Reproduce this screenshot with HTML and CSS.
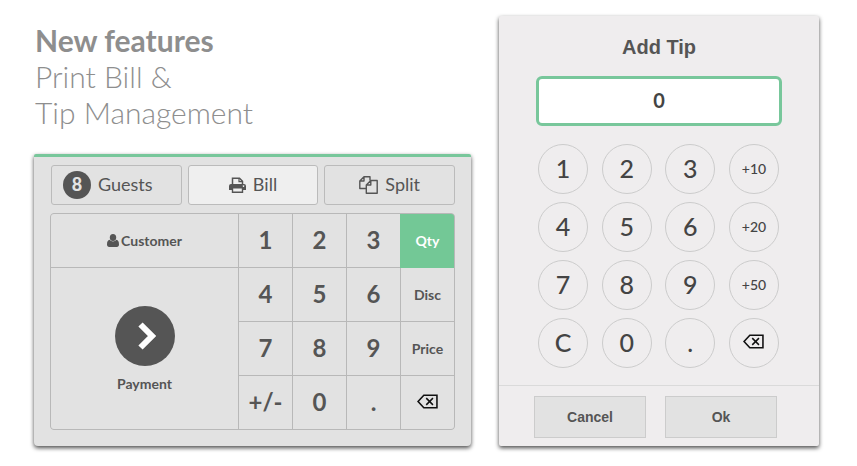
FILE: index.html
```html
<!DOCTYPE html>
<html lang="en">
<head>
    <meta charset="UTF-8">
    <meta name="viewport" content="width=device-width, initial-scale=1.0">
    <title>New features - Print Bill &amp; Tip Management</title>
    <link rel="stylesheet" href="styles.css">
</head>
<body>
    <svg width="0" height="0" class="sprite" aria-hidden="true">
        <symbol id="backspace" viewBox="0 0 20 14">
            <path d="M6.5 1H19v12H6.5L1 7z" fill="none" stroke="currentColor" stroke-width="1.5"/>
            <path d="M8.8 3.8l6.400 6.400M15.200 3.800l-6.400 6.400" fill="none" stroke="currentColor" stroke-width="1.4"/>
        </symbol>
    </svg>

    <main class="page">
        <section class="features">
            <h1>New features <span>Print Bill &amp;<br>Tip Management</span></h1>

            <div class="order-panel">
                <div class="actions">
                    <button type="button" class="action guests"><span class="badge">8</span><span>Guests</span></button>
                    <button type="button" class="action active">
                        <svg width="17" height="16" viewBox="0 0 17 16">
                            <path d="M3.500 8V1.200h7l3 3V8" fill="none" stroke="currentColor" stroke-width="1.500"/>
                            <path d="M10 1v3.700h3.500" fill="none" stroke="currentColor" stroke-width="1.200"/>
                            <path fill-rule="evenodd" d="M2 7h13a2 2 0 0 1 2 2v4h-2.800v3H2.800v-3H0V9a2 2 0 0 1 2-2zm2.200 4.600v3h8.600v-3zM14.500 8.300a.8.8 0 1 0 .01 0z" fill="currentColor"/>
                        </svg>
                        <span>Bill</span>
                    </button>
                    <button type="button" class="action">
                        <svg width="19" height="18" viewBox="0 0 19 18" fill="none" stroke="currentColor" stroke-width="1.400" stroke-linejoin="round">
                            <path d="M7 12.500H.8V5L5 .8h6V4.500M5 .8V5H.8"/>
                            <path d="M18.200 4.500v12.700H7.300V9l4.500-4.500zM11.800 4.500V9H7.300"/>
                        </svg>
                        <span>Split</span>
                    </button>
                </div>

                <div class="keypad">
                    <button type="button" class="key customer">
                        <svg width="12" height="13" viewBox="0 0 12 13" fill="currentColor">
                            <ellipse cx="6" cy="3.500" rx="3.200" ry="3.500"/>
                            <path d="M2.600 5.800C.8 6 0 7.800 0 10.500 0 12 .8 13 2.200 13h7.600c1.400 0 2.200-1 2.200-2.500 0-2.700-.8-4.500-2.600-4.700-1.900 2.300-4.900 2.300-6.800 0z"/>
                        </svg>
                        Customer
                    </button>
                    <button type="button" class="key">1</button>
                    <button type="button" class="key">2</button>
                    <button type="button" class="key">3</button>
                    <button type="button" class="key mode selected">Qty</button>

                    <button type="button" class="key payment">
                        <span class="circle">
                            <svg width="20" height="30" viewBox="0 0 20 30">
                                <path d="M3.500 3.500L15 15 3.500 26.500" fill="none" stroke="currentColor" stroke-width="6"/>
                            </svg>
                        </span>
                        Payment
                    </button>
                    <button type="button" class="key">4</button>
                    <button type="button" class="key">5</button>
                    <button type="button" class="key">6</button>
                    <button type="button" class="key mode">Disc</button>

                    <button type="button" class="key">7</button>
                    <button type="button" class="key">8</button>
                    <button type="button" class="key">9</button>
                    <button type="button" class="key mode">Price</button>

                    <button type="button" class="key">+/-</button>
                    <button type="button" class="key">0</button>
                    <button type="button" class="key">.</button>
                    <button type="button" class="key delete" aria-label="Backspace"><svg width="21" height="15"><use href="#backspace"/></svg></button>
                </div>
            </div>
        </section>

        <section class="tip-popup">
            <div class="tip-body">
                <h2><label for="tip">Add Tip</label></h2>
                <input type="text" id="tip" name="tip" value="0">

                <div class="tip-keys">
                    <button type="button">1</button>
                    <button type="button">2</button>
                    <button type="button">3</button>
                    <button type="button" class="add">+10</button>
                    <button type="button">4</button>
                    <button type="button">5</button>
                    <button type="button">6</button>
                    <button type="button" class="add">+20</button>
                    <button type="button">7</button>
                    <button type="button">8</button>
                    <button type="button">9</button>
                    <button type="button" class="add">+50</button>
                    <button type="button">C</button>
                    <button type="button">0</button>
                    <button type="button">.</button>
                    <button type="button" class="delete" aria-label="Backspace"><svg width="21" height="15"><use href="#backspace"/></svg></button>
                </div>
            </div>
            <div class="tip-footer">
                <button type="button">Cancel</button>
                <button type="button">Ok</button>
            </div>
        </section>
    </main>
</body>
</html>
```
FILE: styles.css
```css
* {
    box-sizing: border-box;
}

body {
    margin: 0;
    background: #fff;
    color: #555;
    font-family: Lato, sans-serif;
}

button {
    margin: 0;
    padding: 0;
    border: none;
    background: none;
    color: inherit;
    font-family: inherit;
    cursor: pointer;
}

.sprite {
    position: absolute;
}

.page {
    display: grid;
    grid-template-columns: minmax(0, 1fr) 320px;
    gap: 28px;
    padding: 16px 38px 20px 34px;
}

.features {
    display: flex;
    flex-direction: column;
    justify-content: space-between;
}

h1 {
    margin: 6px 0 0 1px;
    color: #8e8e8e;
    font-size: 30px;
    line-height: 36px;
    font-weight: 700;
}

h1 span {
    display: block;
    font-weight: 300;
}

/* Order panel */
.order-panel {
    padding: 8px 16px 16px;
    border-top: 3px solid #78c79b;
    border-radius: 2px 2px 4px 4px;
    background: #e2e2e2;
    box-shadow: 0 2px 4px rgba(0, 0, 0, 0.7);
}

.actions {
    display: grid;
    grid-template-columns: repeat(3, 1fr);
    gap: 6px;
    margin-bottom: 8px;
    padding-left: 1px;
}

.action {
    display: flex;
    align-items: center;
    justify-content: center;
    gap: 7px;
    height: 40px;
    border: 1px solid #bbb;
    border-radius: 3px;
    font-size: 18px;
}

.action span {
    padding-bottom: 2px;
}

.action.active {
    background: #efefef;
}

.guests {
    justify-content: flex-start;
    padding-left: 11px;
}

.action .badge {
    width: 28px;
    height: 28px;
    padding: 0;
    border-radius: 50%;
    background: #555;
    color: #e2e2e2;
    font-weight: 900;
    line-height: 27px;
}

.keypad {
    display: grid;
    grid-template-columns: 1fr repeat(4, 53px);
    grid-auto-rows: 53px;
    gap: 1px;
    border: 1px solid #b8b8b8;
    border-radius: 4px;
    background: #b8b8b8;
    overflow: hidden;
}

.key {
    padding-bottom: 2px;
    background: #e2e2e2;
    font-size: 24px;
    font-weight: 700;
}

.mode,
.customer,
.payment {
    padding-bottom: 0;
    font-size: 14px;
}

.selected {
    margin: -1px;
    background: #73c896;
    color: #fff;
}

.customer {
    display: flex;
    align-items: center;
    justify-content: center;
    gap: 2px;
}

.payment {
    display: flex;
    flex-direction: column;
    align-items: center;
    justify-content: center;
    gap: 9px;
    grid-row: span 3;
}

.circle {
    display: flex;
    align-items: center;
    justify-content: center;
    width: 60px;
    height: 60px;
    padding-left: 4px;
    border-radius: 50%;
    background: #555;
    color: #fff;
}

.delete {
    color: #111;
}

.delete svg {
    display: block;
    margin: 0 auto;
}

/* Add tip popup */
.tip-popup {
    background: #efedee;
    border-radius: 2px;
    box-shadow: 0 2px 4px rgba(0, 0, 0, 0.7);
}

.tip-body {
    padding: 18px 37px 17px;
}

h2 {
    margin: 0 0 16px;
    font-family: "Liberation Sans", sans-serif;
    font-size: 20px;
    line-height: 26px;
    text-align: center;
}

#tip {
    display: block;
    width: 100%;
    height: 50px;
    padding: 0 0 2px;
    border: 3px solid #78c79b;
    border-radius: 6px;
    background: #fff;
    color: #444;
    font-family: inherit;
    font-size: 20px;
    font-weight: 700;
    text-align: center;
}

.tip-keys {
    display: grid;
    grid-template-columns: repeat(4, 50px);
    justify-content: space-between;
    gap: 8px 0;
    padding: 18px 3px 0 2px;
}

.tip-keys button {
    height: 50px;
    padding-bottom: 2px;
    border: 1px solid #ccc;
    border-radius: 50%;
    color: #444;
    font-size: 25px;
    font-weight: 500;
}

.tip-keys .add {
    font-size: 14px;
}

.tip-keys .delete {
    padding-bottom: 4px;
    color: #111;
}

.tip-footer {
    display: grid;
    grid-template-columns: 1fr 1fr;
    gap: 19px;
    padding: 10px 42px 8px 35px;
    border-top: 1px solid #dadada;
}

.tip-footer button {
    height: 42px;
    border: 1px solid #ccc;
    background: #e2e2e2;
    font-family: "Liberation Sans", sans-serif;
    font-size: 14px;
    font-weight: 700;
}
```
